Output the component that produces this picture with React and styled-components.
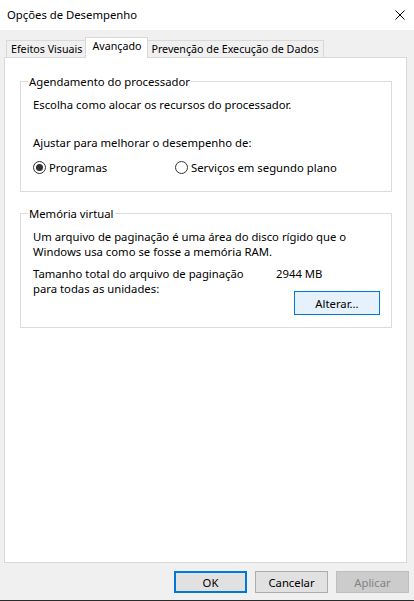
import styled, { createGlobalStyle } from "styled-components";

const GlobalStyle = createGlobalStyle`
  html, body {
    margin: 0;
    padding: 0;
  }
  body {
    background: #f0f0f0;
    font-family: "Segoe UI", "Noto Sans", sans-serif;
    font-size: 11.3px;
    line-height: 15px;
    color: #000;
  }
  * {
    box-sizing: border-box;
  }
`;

const tabs = ["Efeitos Visuais", "Avançado", "Prevenção de Execução de Dados"];

export default function App() {
  return (
    <>
      <GlobalStyle />
      <Window>
        <TitleBar>
          <span>Opções de Desempenho</span>
          <svg width="10" height="10" viewBox="0 0 10 10">
            <path d="M0.5 0.5 L9.5 9.5 M9.5 0.5 L0.5 9.5" stroke="#000" strokeWidth="1" />
          </svg>
        </TitleBar>

        <Body>
          <TabStrip>
            {tabs.map((t) => (
              <Tab key={t} $active={t === "Avançado"}>
                {t}
              </Tab>
            ))}
          </TabStrip>

          <Panel>
            <Group>
              <Legend>Agendamento do processador</Legend>
              <Line $top={8}>Escolha como alocar os recursos do processador.</Line>
              <Line $top={23}>Ajustar para melhorar o desempenho de:</Line>
              <RadioRow>
                <RadioLabel>
                  <Radio $checked />
                  Programas
                </RadioLabel>
                <RadioLabel>
                  <Radio />
                  Serviços em segundo plano
                </RadioLabel>
              </RadioRow>
            </Group>

            <Group $gap={14} $bottom={12}>
              <Legend>Memória virtual</Legend>
              <Line $top={8}>Um arquivo de paginação é uma área do disco rígido que o</Line>
              <Line>Windows usa como se fosse a memória RAM.</Line>
              <SizeRow>
                <SizeLabel>
                  <Line>Tamanho total do arquivo de paginação</Line>
                  <Line>para todas as unidades:</Line>
                </SizeLabel>
                <SizeColumn>
                  <span>2944 MB</span>
                  <ChangeButton>Alterar...</ChangeButton>
                </SizeColumn>
              </SizeRow>
            </Group>
          </Panel>

          <Footer>
            <DialogButton $variant="default">OK</DialogButton>
            <DialogButton>Cancelar</DialogButton>
            <DialogButton $variant="disabled">Aplicar</DialogButton>
          </Footer>
        </Body>
      </Window>
    </>
  );
}

const Window = styled.div`
  width: 414px;
  height: 601px;
  display: flex;
  flex-direction: column;
  background: #f0f0f0;
  border-bottom: 1px solid #2b2b2b;
  overflow: hidden;
`;

const TitleBar = styled.div`
  height: 30px;
  flex-shrink: 0;
  background: #fff;
  display: flex;
  align-items: center;
  justify-content: space-between;
  padding: 0 9px 1px 7px;
`;

const Body = styled.div`
  display: flex;
  flex-direction: column;
  padding: 7px 6px 0 4px;
`;

const TabStrip = styled.div`
  display: flex;
  align-items: flex-end;
  height: 21px;
  margin-bottom: -1px;
  padding-left: 2px;
  position: relative;
  z-index: 1;
`;

const Tab = styled.div`
  height: ${({ $active }) => ($active ? "21px" : "17px")};
  margin: ${({ $active }) => ($active ? "0 -2px 0" : "0 0 1px")};
  padding: ${({ $active }) => ($active ? "1px 6px 0" : "1px 4px 0")};
  background: ${({ $active }) => ($active ? "#fff" : "#f0f0f0")};
  border: 1px solid #d9d9d9;
  border-bottom: none;
  font-size: 10.7px;
  white-space: nowrap;
  position: relative;
  z-index: ${({ $active }) => ($active ? 2 : 1)};
`;

const Panel = styled.div`
  height: 506px;
  background: #fff;
  border: 1px solid #d9d9d9;
  padding: 16px 14px 0 15px;
  margin-right: 1px;
`;

const Group = styled.fieldset`
  margin: ${({ $gap }) => $gap || 0}px 0 0;
  padding: 0 11px ${({ $bottom }) => ($bottom ?? 16)}px 12px;
  border: 1px solid #dcdcdc;
  min-width: 0;
`;

const Legend = styled.legend`
  margin-left: -5px;
  padding: 0 1px;
  line-height: 15px;
`;

const Line = styled.div`
  margin-top: ${({ $top }) => $top || 0}px;
  height: 15px;
  line-height: 15px;
  white-space: nowrap;
`;

const RadioRow = styled.div`
  display: grid;
  grid-template-columns: 142px 1fr;
  margin-top: 10px;
`;

const RadioLabel = styled.label`
  display: flex;
  align-items: center;
  gap: 3px;
  line-height: 15px;
  white-space: nowrap;
`;

const Radio = styled.span`
  width: 13px;
  height: 13px;
  flex-shrink: 0;
  border: 1px solid #333;
  border-radius: 50%;
  display: flex;
  align-items: center;
  justify-content: center;

  &::after {
    content: "";
    width: 7px;
    height: 7px;
    border-radius: 50%;
    background: #333;
    display: ${({ $checked }) => ($checked ? "block" : "none")};
  }
`;

const SizeRow = styled.div`
  display: flex;
  margin-top: 7px;
`;

const SizeLabel = styled.div`
  flex: 1;
`;

const SizeColumn = styled.div`
  width: 104px;
  display: flex;
  flex-direction: column;
  align-items: flex-start;
  line-height: 15px;
`;

const ChangeButton = styled.button`
  align-self: flex-end;
  margin-top: 10px;
  width: 86px;
  height: 24px;
  background: #e5f1fb;
  border: 1px solid #0078d7;
  font: inherit;
  color: #000;
  padding: 0;
`;

const Footer = styled.div`
  display: flex;
  justify-content: flex-end;
  gap: 8px;
  margin-top: 8px;
  margin-right: -1px;
`;

const DialogButton = styled.button`
  width: 73px;
  height: 22px;
  padding: 0;
  font: inherit;
  background: ${({ $variant }) => ($variant === "disabled" ? "#cccccc" : "#e1e1e1")};
  color: ${({ $variant }) => ($variant === "disabled" ? "#838383" : "#000")};
  border: ${({ $variant }) =>
    $variant === "default"
      ? "2px solid #0078d7"
      : $variant === "disabled"
      ? "1px solid #bfbfbf"
      : "1px solid #adadad"};
`;
